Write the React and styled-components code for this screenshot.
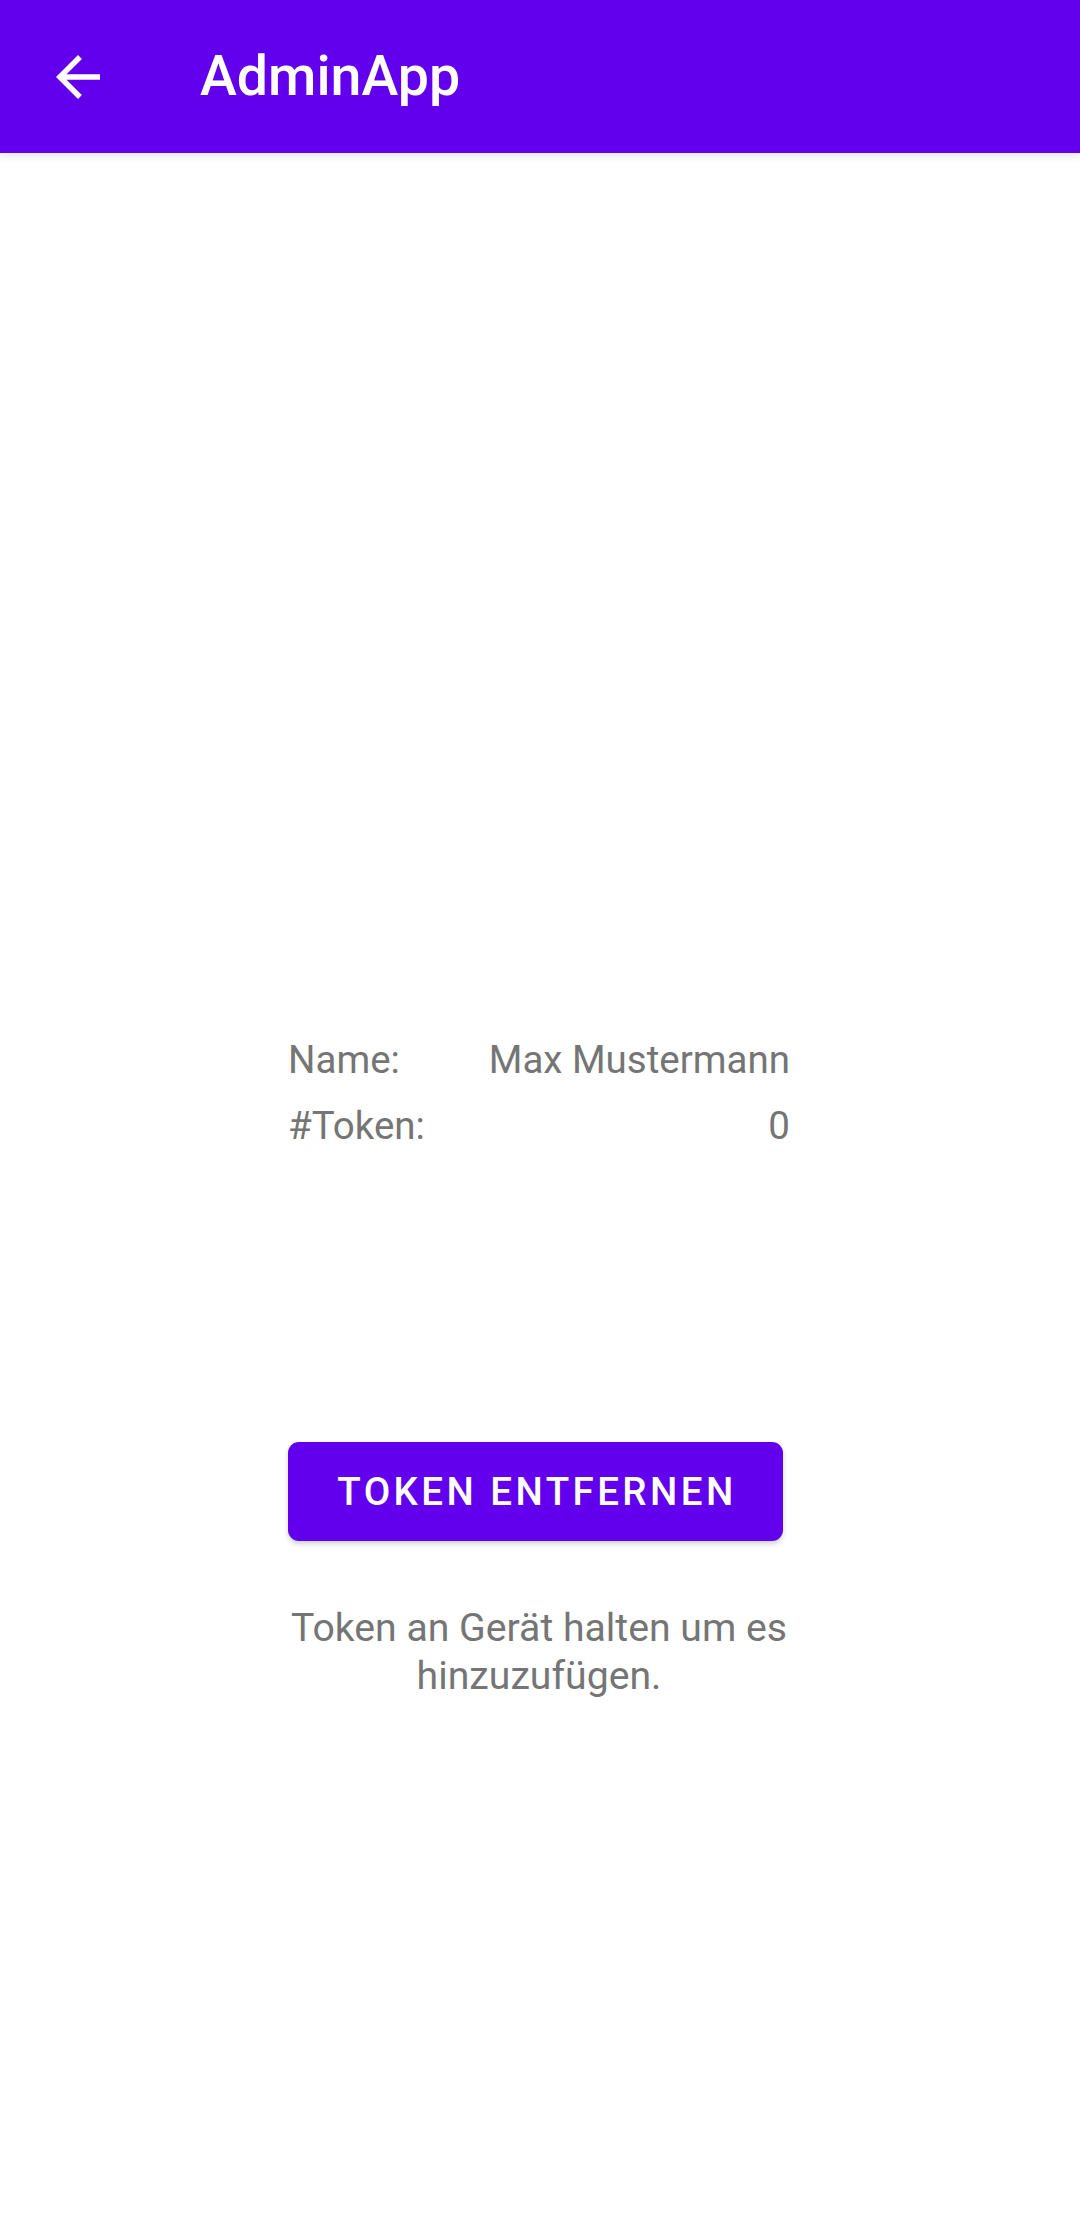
import React from "react";
import styled, { createGlobalStyle } from "styled-components";

const Global = createGlobalStyle`
  html, body { margin: 0; padding: 0; background: #ffffff; }
  body { font-family: Roboto, "Noto Sans", Arial, sans-serif; }
  * { box-sizing: border-box; }
`;

const Page = styled.div`
  width: 1080px;
  min-height: 2240px;
  background: #ffffff;
  display: flex;
  flex-direction: column;
`;

const AppBar = styled.header`
  height: 153px;
  background: #6200ee;
  display: flex;
  align-items: center;
  padding-left: 45px;
  box-shadow: 0 3px 8px rgba(0, 0, 0, 0.1);
  position: relative;
  z-index: 1;
`;

const BackButton = styled.button`
  width: 66px;
  height: 66px;
  padding: 0;
  border: none;
  background: transparent;
  display: flex;
  align-items: center;
  justify-content: center;
  color: #ffffff;
`;

const Title = styled.h1`
  margin: 0 0 0 89px;
  font-family: Roboto, sans-serif;
  font-weight: 500;
  font-size: 55.5px;
  line-height: normal;
  color: #ffffff;
  letter-spacing: 0;
`;

const Main = styled.main`
  padding-left: 288px;
  padding-top: 884px;
`;

const Column = styled.div`
  width: 502px;
  display: flex;
  flex-direction: column;
`;

const InfoList = styled.div`
  display: flex;
  flex-direction: column;
  gap: 21px;
`;

const InfoRow = styled.div`
  display: flex;
  justify-content: space-between;
  font-family: Roboto, sans-serif;
  font-size: 38.5px;
  line-height: 45px;
  color: #757575;
`;

const ActionButton = styled.button`
  margin-top: 294px;
  width: 495px;
  height: 99px;
  border: none;
  border-radius: 11px;
  background: #6200ee;
  color: #ffffff;
  font-family: Roboto, sans-serif;
  font-weight: 500;
  font-size: 38.5px;
  letter-spacing: 3.43px;
  text-transform: uppercase;
  box-shadow: 0 3px 5px rgba(0, 0, 0, 0.18);
  padding: 0 0 0 3px;
`;

const Hint = styled.p`
  margin: 63px 0 0 0;
  width: 502px;
  text-align: center;
  font-family: Roboto, sans-serif;
  font-size: 39.2px;
  line-height: 48px;
  color: #757575;
`;

function BackArrow() {
  return (
    <svg width="66" height="66" viewBox="0 0 24 24" fill="currentColor">
      <path d="M20 11H7.83l5.59-5.59L12 4l-8 8 8 8 1.41-1.41L7.83 13H20v-2z" />
    </svg>
  );
}

export default function App() {
  return (
    <>
      <Global />
      <Page>
        <AppBar>
          <BackButton aria-label="Zurück">
            <BackArrow />
          </BackButton>
          <Title>AdminApp</Title>
        </AppBar>
        <Main>
          <Column>
            <InfoList>
              <InfoRow>
                <span>Name:</span>
                <span>Max Mustermann</span>
              </InfoRow>
              <InfoRow>
                <span>#Token:</span>
                <span>0</span>
              </InfoRow>
            </InfoList>
            <ActionButton>Token entfernen</ActionButton>
            <Hint>Token an Gerät halten um es hinzuzufügen.</Hint>
          </Column>
        </Main>
      </Page>
    </>
  );
}
